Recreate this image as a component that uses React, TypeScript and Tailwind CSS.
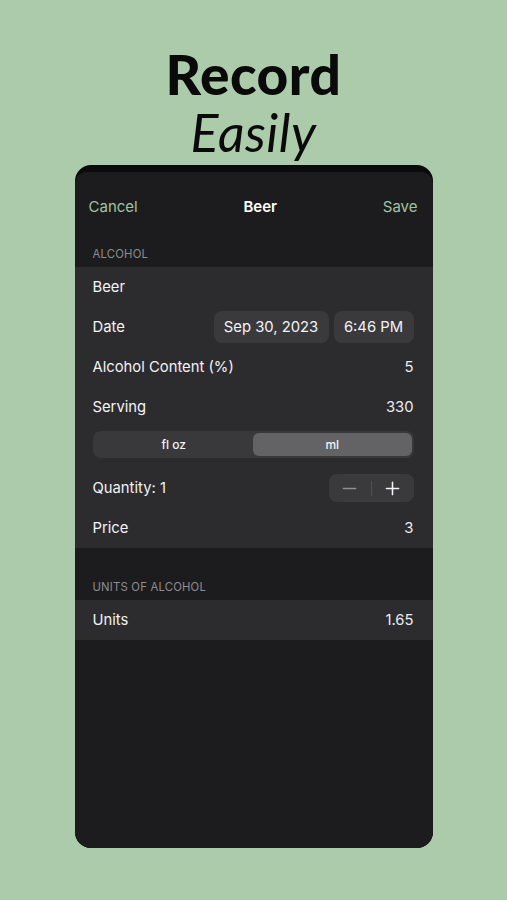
const font = { fontFamily: 'Inter, "Noto Sans", sans-serif' };

function Row({ label, value }: { label: string; value?: string }) {
  return (
    <div className="flex h-10 items-center justify-between pl-[18px] pr-[19px] text-[14.8px] text-[#f2f2f7]">
      <span>{label}</span>
      {value && <span className="text-[#ebebf0]">{value}</span>}
    </div>
  );
}

function SectionHeader({ title, className }: { title: string; className: string }) {
  return (
    <div className={`pl-[18px] text-[11.3px] uppercase leading-[12px] tracking-[0.2px] text-[#8d8d92] ${className}`}>
      {title}
    </div>
  );
}

export default function App() {
  return (
    <div className="flex h-[900px] w-full flex-col items-center bg-[#accbab]" style={font}>
      {/* Headline */}
      <div className="flex flex-col items-center pt-[43px] text-[#0a0a0a]" style={{ fontFamily: 'Lato, "Noto Sans", sans-serif' }}>
        <div className="text-[55px] font-black leading-[62px] tracking-[0.5px]">Record</div>
        <div className="-mt-[3px] text-[52px] italic leading-[60px] tracking-[0.5px]">Easily</div>
      </div>

      {/* Phone */}
      <div className="mt-[3px] flex h-[683px] w-[358px] flex-col overflow-hidden rounded-[16px] bg-[#0b0b0b] pt-[7px]">
        <div className="flex flex-1 flex-col rounded-t-[12px] bg-[#1c1c1e]">
          {/* Nav bar */}
          <div className="flex h-[70px] items-center justify-between px-[14px] pt-[1px] text-[15px]">
            <span className="text-[#a2c3a1]">Cancel</span>
            <span className="font-semibold text-white">Beer</span>
            <span className="pr-[1px] text-[#a2c3a1]">Save</span>
          </div>

          <SectionHeader title="Alcohol" className="pb-[7px] pt-[6px]" />
          <div className="bg-[#2c2c2e]">
            <Row label="Beer" />
            <div className="flex h-10 items-center justify-between pl-[18px] pr-[19px] text-[14.8px] text-[#f2f2f7]">
              <span>Date</span>
              <div className="flex gap-[5px]">
                <div className="flex h-[32px] w-[115px] items-center justify-center rounded-[8px] bg-[#3a3a3c]">
                  Sep 30, 2023
                </div>
                <div className="flex h-[32px] w-[80px] items-center justify-center rounded-[8px] bg-[#3a3a3c]">
                  6:46 PM
                </div>
              </div>
            </div>
            <Row label="Alcohol Content (%)" value="5" />
            <Row label="Serving" value="330" />
            <div className="pb-[10px] pl-[18px] pr-[19px] pt-1">
              <div className="flex h-[27px] rounded-[8px] bg-[#39393c] p-[2px] text-[12px] font-medium text-[#f2f2f7]">
                <div className="flex flex-1 items-center justify-center">fl oz</div>
                <div className="flex flex-1 items-center justify-center rounded-[6px] bg-[#636366]">ml</div>
              </div>
            </div>
            <div className="flex h-10 items-center justify-between pl-[18px] pr-[19px] text-[14.8px] text-[#f2f2f7]">
              <span>Quantity: 1</span>
              <div className="flex h-[28px] w-[85px] items-center rounded-[8px] bg-[#3a3a3c]">
                <div className="flex flex-1 items-center justify-center">
                  <svg width="15" height="15" viewBox="0 0 16 16">
                    <path d="M1.5 8h13" stroke="#8e8e93" strokeWidth="1.6" strokeLinecap="round" />
                  </svg>
                </div>
                <div className="h-[15px] w-px bg-[#505054]" />
                <div className="flex flex-1 items-center justify-center">
                  <svg width="15" height="15" viewBox="0 0 16 16">
                    <path d="M1.5 8h13M8 1.5v13" stroke="#f2f2f7" strokeWidth="1.7" strokeLinecap="round" />
                  </svg>
                </div>
              </div>
            </div>
            <Row label="Price" value="3" />
          </div>

          <SectionHeader title="Units of Alcohol" className="pb-[7px] pt-[33px]" />
          <div className="bg-[#2c2c2e]">
            <Row label="Units" value="1.65" />
          </div>
        </div>
      </div>
    </div>
  );
}
